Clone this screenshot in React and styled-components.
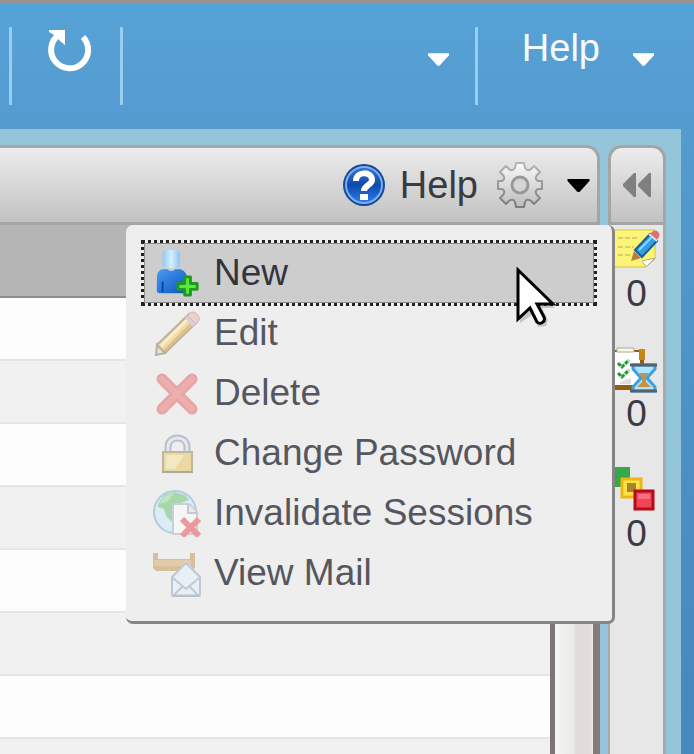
import React from 'react';
import styled, { createGlobalStyle } from 'styled-components';

const GlobalStyle = createGlobalStyle`
  * {
    box-sizing: border-box;
  }
  body {
    margin: 0;
    font-family: 'Liberation Sans', Arial, sans-serif;
    font-size: 37px;
    line-height: 38px;
    color: #3a3a42;
  }
  button {
    font: inherit;
    color: inherit;
    border: none;
    background: none;
    padding: 0;
    display: flex;
    align-items: center;
  }
  svg {
    display: block;
    flex: none;
  }
`;

const Page = styled.div`
  display: flex;
  flex-direction: column;
  min-height: 100vh;
  overflow: hidden;
  border-top: 3px solid #9a9194;
  background: linear-gradient(#4fa4dc 0, #56a1d5 14px, #549bd0 126px, #4a8ec3 520px, #4788bd);
`;

const TopBar = styled.header`
  display: flex;
  align-items: flex-start;
  height: 126px;
  padding: 24px 40px 0 9px;
  color: #f4faff;
`;

const Divider = styled.span`
  width: 3px;
  height: 78px;
  background: #9bcdf0;
`;

const RefreshButton = styled.button`
  margin: 0 25px 0 35px;
  height: 48px;
`;

const AccountButton = styled.button`
  flex: 1;
  justify-content: flex-end;
  height: 64px;
  padding-right: 26px;
`;

const TopHelpButton = styled.button`
  gap: 33px;
  margin-left: 44px;
  height: 42px;
  font-size: 38px;
  svg {
    margin-top: 22px;
  }
`;

const Workspace = styled.div`
  display: flex;
  flex: 1;
  gap: 8px;
  margin-right: 13px;
  padding: 16px 15px 0 0;
  background: #95c5da;
`;

const MainPanel = styled.main`
  display: flex;
  flex-direction: column;
  flex: 1;
  min-width: 0;
`;

const Toolbar = styled.div`
  position: relative;
  display: flex;
  align-items: center;
  justify-content: flex-end;
  height: 80px;
  padding-right: 7px;
  border: solid #a5a5a5;
  border-width: 3px 3px 3px 0;
  border-top-right-radius: 14px;
  background: linear-gradient(#ececec, #c2c2c2);
`;

const HelpButton = styled.button`
  gap: 14px;
  margin-right: 18px;
  font-size: 38px;
`;

const GearButton = styled.button`
  gap: 23px;
`;

const ListArea = styled.div`
  display: flex;
  flex: 1;
`;

const List = styled.div`
  display: flex;
  flex-direction: column;
  flex: 1;
`;

const ListHeader = styled.div`
  height: 73px;
  background: #b5b5b5;
  border-bottom: 2px solid #8e8e8e;
`;

const ListRow = styled.div`
  flex: ${p => p.$fill ? '1' : 'none'};
  height: ${p => p.$fill ? 'auto' : '63px'};
  background: ${p => p.$odd ? '#f1f1f1' : '#fdfdfd'};
  border-bottom: ${p => p.$fill ? 'none' : '2px solid #e6e6e6'};
`;

const ScrollTrack = styled.div`
  width: 50px;
  border-left: 5px solid #7b7474;
  border-right: 7px solid #857b7a;
  background: linear-gradient(90deg, #f5f5f3 0, #e9e9e7 19px, #e0dada 21px, #e3dddd 36px, #f3eeee);
`;

const SidePanel = styled.aside`
  display: flex;
  flex-direction: column;
  width: 58px;
  border: solid #a9a9ab;
  border-width: 0 3px 0 2px;
  border-radius: 14px 14px 0 0;
  background: #e7e7e7;
`;

const CollapseButton = styled.button`
  justify-content: center;
  height: 80px;
  margin: 0 -3px 0 -2px;
  border: 3px solid #a5a5a5;
  border-radius: 14px 14px 0 0;
  background: linear-gradient(#ececec, #c2c2c2);
`;

const SideItem = styled.button`
  flex-direction: column;
  gap: 2px;
  height: 120px;
`;

const Menu = styled.div`
  position: absolute;
  z-index: 2;
  top: 77px;
  right: -18px;
  width: 489px;
  padding: 18px;
  border: solid #858585;
  border-width: 0 3px 3px 0;
  border-radius: 7px;
  background: #eeeeee;
`;

const MenuItem = styled.button`
  position: relative;
  gap: 13px;
  width: 100%;
  height: 60px;
  padding-left: 9px;
  color: ${p => p.$selected ? '#34343c' : '#56565e'};
  background: ${p => p.$selected ? '#cdcdcd' : 'none'};
  outline: ${p => p.$selected ? '3px dotted #222' : 'none'};
  box-shadow: ${p => p.$selected ? 'inset 0 0 0 1px #8c8c8c' : 'none'};
  svg {
    opacity: ${p => p.$selected ? 1 : 0.5};
  }
`;

const Pointer = styled.span`
  position: absolute;
  z-index: 1;
  left: 372px;
  top: 24px;
`;

const Caret = ({ width = 21, color = '#fff' }) => (
  <svg width={width} height="13" viewBox="0 0 22 13">
    <path d="M0 0h22v2L12 13h-2L0 2z" fill={color} />
  </svg>
);

const RefreshIcon = () => (
  <svg width="48" height="48" viewBox="0 0 48 48">
    <path d="M11.500 8A18.500 18.500 0 1 0 36 10" fill="none" stroke="#fff" strokeWidth="6" />
    <path d="M2 3h16v15l-5-4-4-5-7-4z" fill="#fff" />
  </svg>
);

const HelpIcon = () => (
  <svg width="44" height="44" viewBox="0 0 44 44">
    <defs>
      <linearGradient id="helpFill" x2="0" y2="1">
        <stop offset="0" stopColor="#3d76cf" />
        <stop offset="0.5" stopColor="#0c49ad" />
        <stop offset="1" stopColor="#2c80ee" />
      </linearGradient>
    </defs>
    <circle cx="22" cy="22" r="21" fill="#174796" />
    <circle cx="22" cy="22" r="18" fill="url(#helpFill)" stroke="#79aef0" strokeWidth="2" />
    <path d="M14 18c0-10 16-10 16-1 0 5-8 5-8 11" fill="none" stroke="#fff" strokeWidth="6" />
    <path d="M18 31h8v6h-8z" fill="#fff" />
  </svg>
);

const GearIcon = () => (
  <svg width="48" height="48" viewBox="0 0 48 48">
    <defs>
      <linearGradient id="gearFill" x2="0" y2="1">
        <stop offset="0" stopColor="#fafafa" />
        <stop offset="1" stopColor="#bcbcbc" />
      </linearGradient>
      <linearGradient id="gearLine" x2="0" y2="1">
        <stop offset="0" stopColor="#b5b5b5" />
        <stop offset="1" stopColor="#7c7c7c" />
      </linearGradient>
    </defs>
    <path
      d="M20 2h8l1 5q3 4 6 1l3-3 6 6-3 3q-3 4 1 6h4v8h-4q-4 2-1 6l3 3-6 6-3-3q-4-3-6 1l-1 5h-8l-1-5q-2-4-6-1l-3 3-6-6 3-3q3-4-1-6h-4v-8h4q4-2 1-6l-3-3 6-6 3 3q3 3 6-1z"
      fill="url(#gearFill)" stroke="url(#gearLine)" strokeWidth="2" strokeLinejoin="round"
    />
    <circle cx="24" cy="24" r="8" fill="#d5d5d5" stroke="#999" strokeWidth="3" />
  </svg>
);

const CollapseIcon = () => (
  <svg width="28" height="24" viewBox="0 0 28 24">
    <path d="M13 0v24h-2L0 13v-2L11 0zM28 0v24h-2L15 13v-2L26 0z" fill="#808080" />
  </svg>
);

const UserAddIcon = () => (
  <svg width="48" height="48" viewBox="0 0 48 50">
    <defs>
      <linearGradient id="userHead">
        <stop offset="0" stopColor="#8cc8f4" />
        <stop offset="0.5" stopColor="#d8f0ff" />
        <stop offset="1" stopColor="#8cc4f0" />
      </linearGradient>
      <linearGradient id="userBody" x2="1" y2="1">
        <stop offset="0" stopColor="#4a9cf0" />
        <stop offset="1" stopColor="#0a54bf" />
      </linearGradient>
    </defs>
    <path d="M8 21h6q4 4 8 0h6q7 3 7 11v14H6q-3 0-3-3V31q0-8 5-10z" fill="url(#userBody)" />
    <rect x="9" y="1" width="18" height="19" rx="4" fill="url(#userHead)" />
    <path d="M9 34v11" stroke="#0847a0" strokeWidth="2" />
    <path d="M32 29h6v7h7v6h-7v6h-6v-6h-7v-6h7z" fill="#59e840" stroke="#1c9b20" strokeWidth="3" strokeLinejoin="round" />
  </svg>
);

const PencilIcon = () => (
  <svg width="48" height="48" viewBox="0 0 48 48">
    <path d="M4 36L36 5l8 8-32 31-8 1z" fill="#f6c755" stroke="#927747" strokeWidth="2" />
    <path d="M8 37L36 9" stroke="#fff0ae" strokeWidth="3" />
    <path d="M11 42l29-29" stroke="#c98b29" strokeWidth="2" />
    <path d="M4 36l8 8-9 2z" fill="#ead8b2" stroke="#7f7361" strokeWidth="2" />
    <path d="M33 8l8 8" stroke="#b9b9b9" strokeWidth="4" />
    <path d="M36 5q4-4 8 0t1 8l-2 2-8-8z" fill="#e9b3b3" stroke="#a58787" />
  </svg>
);

const DeleteIcon = () => (
  <svg width="48" height="48" viewBox="0 0 48 48">
    <path d="M9 10l30 30M39 10L9 40" stroke="#df5e62" strokeWidth="11" strokeLinecap="round" />
    <path d="M9 10l30 30M39 10L9 40" stroke="#ef6f70" strokeWidth="6" strokeLinecap="round" />
  </svg>
);

const LockIcon = () => (
  <svg width="48" height="48" viewBox="0 0 48 48">
    <path d="M15 23v-5c0-12 19-12 19 0v5" fill="none" stroke="#8295b0" strokeWidth="7" />
    <path d="M15 23v-5c0-12 19-12 19 0v5" fill="none" stroke="#dce4ef" strokeWidth="3" />
    <rect x="10" y="23" width="29" height="20" fill="#e9c556" stroke="#97804c" strokeWidth="2" />
    <path d="M13 26h18l-9 14h-9z" fill="#f6e49a" />
    <path d="M9 43h31" stroke="#6b6450" strokeWidth="2" />
  </svg>
);

const SessionIcon = () => (
  <svg width="48" height="48" viewBox="0 0 48 48">
    <circle cx="22" cy="23" r="21" fill="#cdeafd" stroke="#71acdd" strokeWidth="2" />
    <path d="M5 15L11 6l10-3 11 3 4 5-8 3-3 5-6 3v11l-6-6-2-7-6-2z" fill="#65c469" />
    <path d="M6 15l6-8 9-3-6 8z" fill="#91dda0" />
    <path d="M20 15h16l8 8v22H20z" fill="#fff" stroke="#a6b2c0" strokeWidth="2" />
    <path d="M35 15v9h9" fill="#e4e9f0" stroke="#97a6b8" strokeWidth="2" />
    <path d="M29 30l17 17M46 30L29 47" stroke="#ed474b" strokeWidth="6" />
  </svg>
);

const MailIcon = () => (
  <svg width="48" height="48" viewBox="0 0 48 48">
    <path d="M0 4h5v6h32V4h5v15l-3 3H3l-3-3z" fill="#bf9449" />
    <path d="M1 11h37v6H1z" fill="#d3ab64" />
    <path d="M33 12L18 29v20h30V29z" fill="#eee" />
    <path d="M33 14L19 28v17c0 2 1 3 3 3h22c2 0 3-1 3-3V28z" fill="#e6f2fc" stroke="#8fa4bd" strokeWidth="2" />
    <path d="M20 29l13 11 13-11M21 46l9-9M45 46l-9-9" fill="none" stroke="#91a5bb" strokeWidth="2" />
    <path d="M20 47h26" stroke="#8297ae" strokeWidth="3" />
  </svg>
);

const NoteIcon = () => (
  <svg width="48" height="48" viewBox="0 0 48 48">
    <path d="M0 5h42v29l-9 8H0z" fill="#fbf477" stroke="#cfc452" strokeWidth="1" />
    <path d="M5 13h21M5 22h16M5 30h12" stroke="#d8cb70" strokeWidth="2" strokeDasharray="5 2" />
    <path d="M42 33l-9 9-4-6z" fill="#fffef0" stroke="#b2ad81" />
    <path d="M18 36l3-10 7 7z" fill="#b87c3d" />
    <path d="M22 25L37 9l7 7-15 16z" fill="#349ee0" stroke="#165f9d" strokeWidth="2" />
    <path d="M26 25l13-13" stroke="#8ad4ff" strokeWidth="2" />
    <path d="M37 9l3-3c3-2 8 2 6 6l-3 4z" fill="#dc7078" />
    <path d="M36 9l8 7" stroke="#d6dee8" strokeWidth="2" />
  </svg>
);

const TaskIcon = () => (
  <svg width="48" height="48" viewBox="0 0 48 48">
    <path d="M0 5h31v40H0z" fill="#955b13" />
    <path d="M0 7h27v33H0z" fill="#fff" />
    <path d="M4 3h17v4H4z" fill="#f7f7f4" stroke="#b4aa86" />
    <path d="M26 4h6v11h-6z" fill="#c78618" />
    <path d="M5 18l4 4 7-7M5 28l4 4 7-7" fill="none" stroke="#279a32" strokeWidth="3" strokeDasharray="4 1" />
    <path d="M7 37l11-4v6H7z" fill="#ddd" />
    <path d="M20 20h22v4L34 33l8 9v4H20v-4l8-9-8-9z" fill="#ace6ff" stroke="#3b9fe2" strokeWidth="3" />
    <path d="M26 28h10l-3 4v5l5 5H24l5-5v-5z" fill="#c39445" />
    <path d="M17 20h27M17 46h27" stroke="#596066" strokeWidth="3" />
  </svg>
);

const BlocksIcon = () => (
  <svg width="48" height="48" viewBox="0 0 48 48">
    <path d="M0 2h17v20H0z" fill="#36a947" />
    <path d="M9 14h19v18H9z" fill="#ffe24b" stroke="#ecb713" strokeWidth="3" />
    <path d="M14 18h9v9h-9z" fill="#a88428" />
    <path d="M22 26h18v18H22z" fill="#ee4656" stroke="#b90918" strokeWidth="3" />
    <path d="M25 29h12v5H25z" fill="#f67180" />
  </svg>
);

const PointerIcon = () => (
  <svg width="42" height="64" viewBox="0 0 42 64">
    <path d="M4 6v50l12-8 6 12 8-1 2-6-6-12h13z" fill="#777" opacity="0.35" />
    <path d="M2 3v49l12-11 7 14c3 3 9 0 7-5l-7-13h16z" fill="#fff" stroke="#000" strokeWidth="3" />
  </svg>
);

const menuItems = [
  { label: 'New', Icon: UserAddIcon, selected: true },
  { label: 'Edit', Icon: PencilIcon },
  { label: 'Delete', Icon: DeleteIcon },
  { label: 'Change Password', Icon: LockIcon },
  { label: 'Invalidate Sessions', Icon: SessionIcon },
  { label: 'View Mail', Icon: MailIcon },
];

const sideItems = [
  { name: 'Notes', Icon: NoteIcon, count: 0 },
  { name: 'Tasks', Icon: TaskIcon, count: 0 },
  { name: 'Status', Icon: BlocksIcon, count: 0 },
];

const rows = [0, 1, 2, 3, 4, 5, 6];

export default function App() {
  return (
    <Page>
      <GlobalStyle />
      <TopBar>
        <Divider />
        <RefreshButton aria-label="Refresh"><RefreshIcon /></RefreshButton>
        <Divider />
        <AccountButton aria-label="Account"><Caret /></AccountButton>
        <Divider />
        <TopHelpButton>Help<Caret /></TopHelpButton>
      </TopBar>
      <Workspace>
        <MainPanel>
          <Toolbar>
            <HelpButton><HelpIcon />Help</HelpButton>
            <GearButton aria-label="Actions" aria-haspopup="menu">
              <GearIcon />
              <Caret width={23} color="#000" />
            </GearButton>
            <Menu role="menu">
              {menuItems.map(({ label, Icon, selected }) => (
                <MenuItem key={label} role="menuitem" $selected={selected}>
                  <Icon />
                  {label}
                  {selected && <Pointer><PointerIcon /></Pointer>}
                </MenuItem>
              ))}
            </Menu>
          </Toolbar>
          <ListArea>
            <List>
              <ListHeader />
              {rows.map(i => <ListRow key={i} $odd={i % 2 === 1} />)}
              <ListRow $odd $fill />
            </List>
            <ScrollTrack />
          </ListArea>
        </MainPanel>
        <SidePanel>
          <CollapseButton aria-label="Collapse"><CollapseIcon /></CollapseButton>
          {sideItems.map(({ name, Icon, count }) => (
            <SideItem key={name} aria-label={name}>
              <Icon />
              {count}
            </SideItem>
          ))}
        </SidePanel>
      </Workspace>
    </Page>
  );
}
